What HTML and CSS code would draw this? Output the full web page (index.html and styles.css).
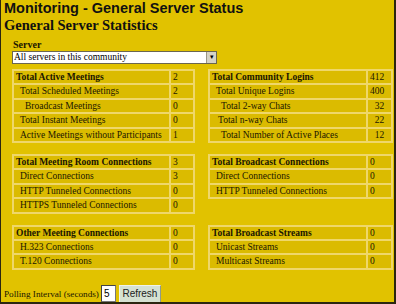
FILE: index.html
```html
<!DOCTYPE html>
<html lang="en">
<head>
    <meta charset="UTF-8">
    <title>Monitoring - General Server Status</title>
    <link rel="stylesheet" href="styles.css">
</head>
<body>
<div class="window">

    <h1 class="page-title">Monitoring - General Server Status</h1>
    <h2 class="section-title">General Server Statistics</h2>

    <!-- Server picker -->
    <div class="server-pick">
        <label class="field-label" for="server">Server</label>
        <div class="select-box">
            <select id="server">
                <option>All servers in this community</option>
            </select>
            <span class="select-arrow">&#9662;</span>
        </div>
    </div>

    <!-- Stats tables -->
    <div class="stats-grid">
        <table class="stats">
            <tr class="head"><td>Total Active Meetings</td><td class="val">2</td></tr>
            <tr><td class="in1">Total Scheduled Meetings</td><td class="val">2</td></tr>
            <tr><td class="in2">Broadcast Meetings</td><td class="val">0</td></tr>
            <tr><td class="in1">Total Instant Meetings</td><td class="val">0</td></tr>
            <tr><td class="in1">Active Meetings without Participants</td><td class="val">1</td></tr>
        </table>

        <table class="stats wide">
            <tr class="head"><td>Total Community Logins</td><td class="val">412</td></tr>
            <tr><td class="in1">Total Unique Logins</td><td class="val">400</td></tr>
            <tr><td class="in2">Total 2-way Chats</td><td class="val mid">32</td></tr>
            <tr><td class="in15">Total n-way Chats</td><td class="val mid">22</td></tr>
            <tr><td class="in2">Total Number of Active Places</td><td class="val mid">12</td></tr>
        </table>

        <table class="stats">
            <tr class="head"><td>Total Meeting Room Connections</td><td class="val">3</td></tr>
            <tr><td class="in1">Direct Connections</td><td class="val">3</td></tr>
            <tr><td class="in1">HTTP Tunneled Connections</td><td class="val">0</td></tr>
            <tr><td class="in1">HTTPS Tunneled Connections</td><td class="val">0</td></tr>
        </table>

        <table class="stats wide">
            <tr class="head"><td>Total Broadcast Connections</td><td class="val">0</td></tr>
            <tr><td class="in1">Direct Connections</td><td class="val">0</td></tr>
            <tr><td class="in1">HTTP Tunneled Connections</td><td class="val">0</td></tr>
        </table>

        <table class="stats">
            <tr class="head"><td>Other Meeting Connections</td><td class="val">0</td></tr>
            <tr><td class="in1">H.323 Connections</td><td class="val">0</td></tr>
            <tr><td class="in1">T.120 Connections</td><td class="val">0</td></tr>
        </table>

        <table class="stats wide">
            <tr class="head"><td>Total Broadcast Streams</td><td class="val">0</td></tr>
            <tr><td class="in1">Unicast Streams</td><td class="val">0</td></tr>
            <tr><td class="in1">Multicast Streams</td><td class="val">0</td></tr>
        </table>
    </div>

    <!-- Polling -->
    <div class="polling">
        <span class="poll-label">Polling Interval (seconds)</span>
        <input type="text" class="poll-input" value="5">
        <button class="refresh-btn">Refresh</button>
    </div>

</div>
</body>
</html>
```

FILE: styles.css
```css
/* Global */
body {
    margin: 0;
    background: #e1c200;
    color: #1a1600;
    font-family: "Liberation Serif", "Times New Roman", serif;
}

.window {
    height: 304px;
    box-sizing: border-box;
    border-left: 1px solid #2b2610;
    border-right: 2px solid #2b2610;
    border-bottom: 2px solid #2b2610;
    overflow: hidden;
}

/* Titles */
.page-title {
    margin: 0;
    padding-left: 3px;
    font-family: "Liberation Sans", Arial, sans-serif;
    font-size: 14.5px;
    line-height: 16px;
    font-weight: bold;
    color: #111;
}

.section-title {
    margin: 0;
    padding-left: 3px;
    font-size: 14.5px;
    line-height: 18px;
    font-weight: bold;
    color: #111;
}

/* Server picker */
.server-pick {
    padding-left: 11px;
    margin-top: 5px;
}

.field-label {
    display: block;
    font-size: 10px;
    line-height: 12px;
    font-weight: bold;
    padding-left: 1px;
}

.select-box {
    display: flex;
    width: 205px;
    height: 13px;
    box-sizing: border-box;
    border: 1px solid #6b6650;
    background: #fff;
}

.select-box select {
    flex: 1;
    appearance: none;
    -webkit-appearance: none;
    border: none;
    background: #fff;
    margin: 0;
    padding: 0 0 0 1px;
    font-family: "Liberation Serif", "Times New Roman", serif;
    font-size: 9.5px;
    line-height: 11px;
    height: 11px;
    color: #000;
    outline: none;
}

.select-arrow {
    width: 9px;
    background: #d6d3c6;
    border-left: 1px solid #9a9684;
    font-size: 7px;
    line-height: 11px;
    text-align: center;
    color: #000;
}

/* Stats tables */
.stats-grid {
    display: grid;
    grid-template-columns: 183px 185px;
    column-gap: 13px;
    row-gap: 11px;
    align-items: start;
    padding-left: 11px;
    margin-top: 5px;
}

.stats {
    width: 100%;
    border-collapse: separate;
    border-spacing: 0;
    border: 1px solid #efd76a;
    font-size: 9.5px;
}

.stats td {
    border: 1px solid #efd76a;
    background: #dbbb00;
    padding: 0 0 0 2px;
    line-height: 12.4px;
    white-space: nowrap;
}

.stats .head td {
    font-weight: bold;
}

.stats .head td.val {
    font-weight: normal;
}

.stats td.in1 { padding-left: 6px; }
.stats td.in15 { padding-left: 8px; }
.stats td.in2 { padding-left: 11px; }

.stats td.val {
    width: 20px;
}

.stats.wide td.val {
    width: 21px;
}

.stats td.mid {
    text-align: center;
    padding-left: 0;
}

/* Polling */
.polling {
    display: flex;
    align-items: center;
    gap: 2px;
    margin-top: 15px;
    padding-left: 3px;
}

.poll-label {
    font-size: 9.2px;
    white-space: nowrap;
}

.poll-input {
    width: 15px;
    height: 17px;
    box-sizing: border-box;
    margin: 0;
    padding: 0 0 0 2px;
    border: 1px solid #777;
    border-top-color: #444;
    border-left-color: #444;
    background: #fff;
    font-family: "Liberation Sans", Arial, sans-serif;
    font-size: 10px;
    color: #000;
}

.refresh-btn {
    width: 42px;
    height: 18px;
    margin-left: 1px;
    padding: 0;
    border: 1px solid #eef3ec;
    border-right-color: #8f9a8c;
    border-bottom-color: #8f9a8c;
    background: #d5e1d2;
    font-family: "Liberation Sans", Arial, sans-serif;
    font-size: 10px;
    color: #222;
}
```
